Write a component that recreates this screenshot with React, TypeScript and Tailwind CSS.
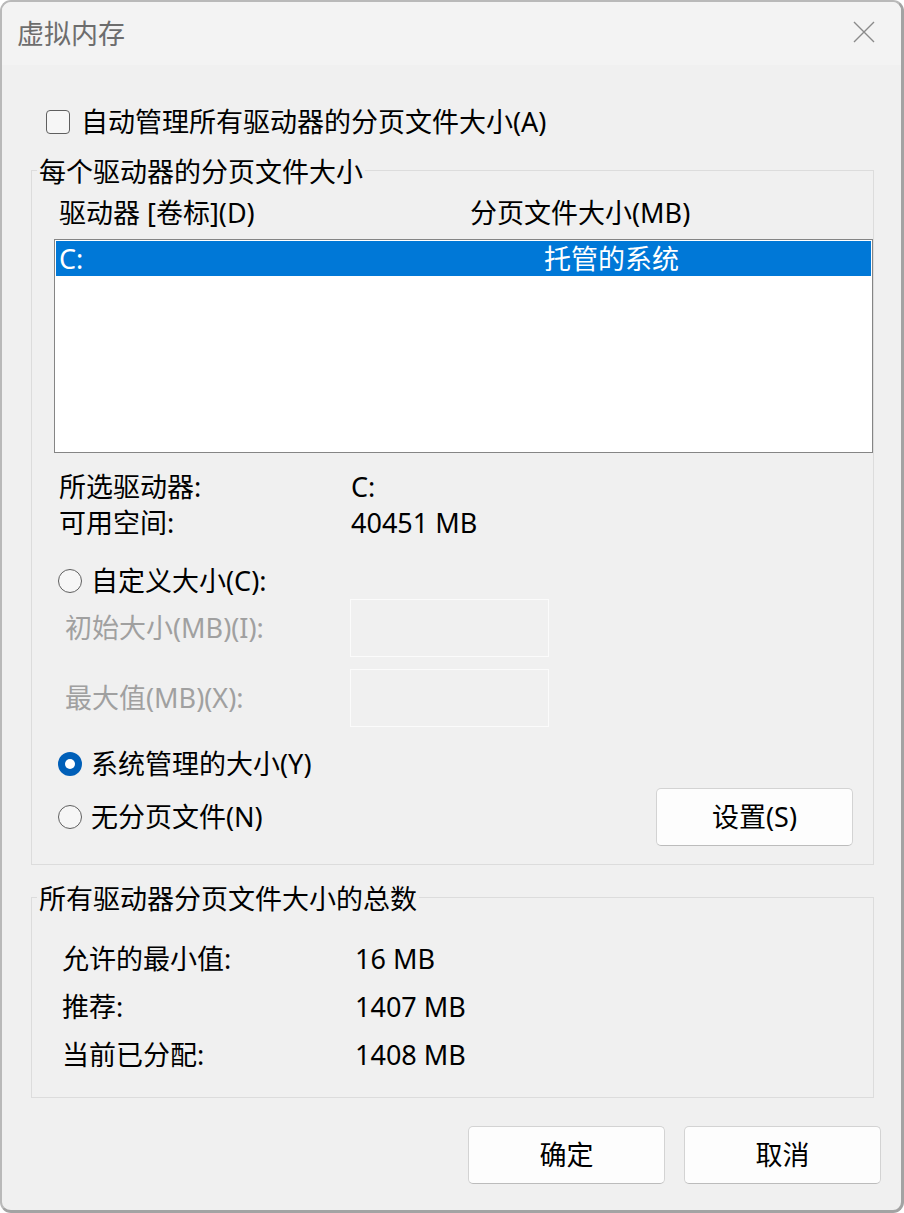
import React from 'react';

const Radio: React.FC<{ checked?: boolean }> = ({ checked }) =>
  checked ? (
    <span className="flex h-[24px] w-[24px] shrink-0 items-center justify-center rounded-full bg-[#005fb8]">
      <span className="h-[10px] w-[10px] rounded-full bg-white" />
    </span>
  ) : (
    <span className="h-[24px] w-[24px] shrink-0 rounded-full border border-[#5f5f5f] bg-[#f6f6f6]" />
  );

const Button: React.FC<{ label: string }> = ({ label }) => (
  <button className="flex h-[58px] w-[197px] items-center justify-center rounded-[5px] border border-[#d3d3d3] border-b-[#bcbcbc] bg-[#fdfdfd] text-black">
    {label}
  </button>
);

export default function App() {
  return (
    <div className="h-[1213px] w-[904px] bg-white font-['Noto_Sans','Noto_Sans_CJK_SC',sans-serif] text-[27px] text-black">
      <div className="flex h-full w-full flex-col overflow-hidden rounded-[11px] border-2 border-r-[3px] border-b-[3px] border-[#b9b9b9] border-r-[#a3a3a3] border-b-[#a3a3a3] bg-[#f0f0f0]">
        {/* 标题栏 */}
        <div className="flex h-[63px] shrink-0 items-center justify-between bg-[#f3f3f3] pl-[15px] pr-[26px]">
          <span className="text-[27px] leading-[34px] text-[#6d6d6d]">虚拟内存</span>
          <svg width="22" height="22" viewBox="0 0 22 22" className="-mt-[3px]">
            <path d="M1 1 L21 21 M21 1 L1 21" stroke="#8a8a8a" strokeWidth="1.4" fill="none" />
          </svg>
        </div>

        <div className="pl-[29px] pr-[27px]">
          {/* 自动管理 */}
          <div className="mt-[40px] flex h-[34px] items-center pl-[15px] leading-[34px]">
            <span className="h-[24px] w-[24px] shrink-0 rounded-[4px] border border-[#5f5f5f] bg-[#f6f6f6]" />
            <span className="ml-[11px]">自动管理所有驱动器的分页文件大小(A)</span>
          </div>

          {/* 每个驱动器 */}
          <div className="mt-[31px] border border-[#dcdcdc] pb-[18px]">
            <div className="-mt-[16px] ml-[5px] w-fit bg-[#f0f0f0] px-[2px] leading-[34px]">每个驱动器的分页文件大小</div>

            <div className="mt-[7px] flex h-[34px] items-center pl-[27px] leading-[34px]">
              <span className="w-[411px]">驱动器 [卷标](D)</span>
              <span>分页文件大小(MB)</span>
            </div>

            <div className="ml-[22px] mt-[9px] h-[214px] border border-[#858585] bg-white p-[1px]">
              <div className="flex h-[35px] items-center bg-[#0078d7] pl-[3px] leading-[34px] text-white">
                <span className="w-[485px]">C:</span>
                <span>托管的系统</span>
              </div>
            </div>

            <div className="mt-[16px] pl-[27px] leading-[36px]">
              <div className="flex h-[36px] items-center">
                <span className="w-[292px]">所选驱动器:</span>
                <span>C:</span>
              </div>
              <div className="flex h-[36px] items-center">
                <span className="w-[292px]">可用空间:</span>
                <span>40451 MB</span>
              </div>
            </div>

            <div className="mt-[23px] flex h-[34px] items-center gap-[9px] pl-[26px] leading-[34px]">
              <Radio />
              <span>自定义大小(C):</span>
            </div>

            <div className="mt-[1px] flex h-[58px] items-center pl-[33px] text-[#a0a0a0]">
              <span className="w-[285px]">初始大小(MB)(I):</span>
              <span className="h-[58px] w-[199px] border border-[#fbfbfb]" />
            </div>
            <div className="mt-[12px] flex h-[58px] items-center pl-[33px] text-[#a0a0a0]">
              <span className="w-[285px]">最大值(MB)(X):</span>
              <span className="h-[58px] w-[199px] border border-[#fbfbfb]" />
            </div>

            <div className="mt-[20px] flex h-[34px] items-center gap-[9px] pl-[26px] leading-[34px]">
              <Radio checked />
              <span>系统管理的大小(Y)</span>
            </div>

            <div className="mt-[7px] flex h-[58px] items-center justify-between pl-[26px] pr-[20px] leading-[34px]">
              <div className="flex items-center gap-[9px]">
                <Radio />
                <span>无分页文件(N)</span>
              </div>
              <Button label="设置(S)" />
            </div>
          </div>

          {/* 总数 */}
          <div className="mt-[32px] border border-[#dcdcdc] pb-[18px]">
            <div className="-mt-[16px] ml-[5px] w-fit bg-[#f0f0f0] px-[2px] leading-[34px]">所有驱动器分页文件大小的总数</div>
            <div className="mt-[19px] pl-[30px]">
              <div className="flex h-[48px] items-center">
                <span className="w-[293px]">允许的最小值:</span>
                <span>16 MB</span>
              </div>
              <div className="flex h-[48px] items-center">
                <span className="w-[293px]">推荐:</span>
                <span>1407 MB</span>
              </div>
              <div className="flex h-[48px] items-center">
                <span className="w-[293px]">当前已分配:</span>
                <span>1408 MB</span>
              </div>
            </div>
          </div>
        </div>

        {/* 按钮 */}
        <div className="mt-[28px] flex justify-end gap-[19px] pr-[20px]">
          <Button label="确定" />
          <Button label="取消" />
        </div>
      </div>
    </div>
  );
}
